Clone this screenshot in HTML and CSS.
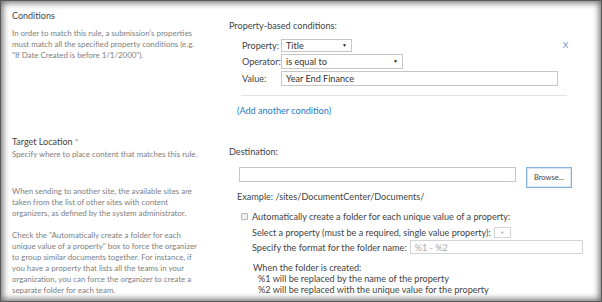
FILE: index.html
```html
<!DOCTYPE html>
<html lang="en">
<head>
    <meta charset="UTF-8">
    <title>Content Organizer Rule</title>
    <link rel="stylesheet" href="styles.css">
</head>
<body>
<div class="frame">
    <section class="row">
        <div class="info">
            <h2>Conditions</h2>
            <p class="first">In order to match this rule, a submission's properties<br>must match all the specified property conditions (e.g.<br>"If Date Created is before 1/1/2000").</p>
        </div>
        <div class="fields">
            <div class="label">Property-based conditions:</div>
            <div class="cond">
                <span class="cond-label">Property:</span>
                <div class="select w-prop"><span>Title</span><i class="arrow">&#9660;</i></div>
                <a class="remove">X</a>
                <span class="cond-label">Operator:</span>
                <div class="select w-op"><span>is equal to</span><i class="arrow">&#9660;</i></div>
                <span></span>
                <span class="cond-label">Value:</span>
                <div class="input w-val">Year End Finance</div>
                <span></span>
            </div>
            <div class="sep"></div>
            <a class="link">(Add another condition)</a>
        </div>
    </section>

    <section class="row target">
        <div class="info">
            <h2>Target Location <span class="req">*</span></h2>
            <p class="tight">Specify where to place content that matches this rule.</p>
            <p class="gap-lg">When sending to another site, the available sites are<br>taken from the list of other sites with content<br>organizers, as defined by the system administrator.</p>
            <p class="gap">Check the "Automatically create a folder for each<br>unique value of a property" box to force the organizer<br>to group similar documents together. For instance, if<br>you have a property that lists all the teams in your<br>organization, you can force the organizer to create a<br>separate folder for each team.</p>
        </div>
        <div class="fields">
            <div class="label">Destination:</div>
            <div class="dest">
                <div class="input w-dest"></div>
                <div class="browse">Browse...</div>
            </div>
            <div class="example">Example: /sites/DocumentCenter/Documents/</div>
            <div class="auto">
                <div class="check"><span class="box"></span>Automatically create a folder for each unique value of a property:</div>
                <div class="opt opt-prop">Select a property (must be a required, single value property): <div class="select w-small"><i class="arrow">&#9660;</i></div></div>
                <div class="opt opt-fmt">Specify the format for the folder name: <div class="input w-fmt placeholder">%1 - %2</div></div>
                <div class="note">
                    <div>When the folder is created:</div>
                    <div class="sub">%1 will be replaced by the name of the property</div>
                    <div class="sub">%2 will be replaced with the unique value for the property</div>
                </div>
            </div>
        </div>
    </section>
</div>
</body>
</html>
```

FILE: styles.css
```css
body {
    margin: 0;
    font-family: Lato, "Open Sans", sans-serif;
    color: #444;
}
.frame {
    width: 602px;
    height: 302px;
    box-sizing: border-box;
    padding: 10px 0 0 12px;
    background: #fff;
    overflow: hidden;
    box-shadow: inset 0 0 0 1px #5a5a5a, inset 0 0 6px 3px rgba(0, 0, 0, 0.55);
}
.row {
    display: grid;
    grid-template-columns: 217px 1fr;
}
.target {
    margin-top: 20px;
}
h2 {
    margin: 0;
    font-size: 9px;
    line-height: 12px;
    font-weight: normal;
    color: #444;
}
.req {
    color: #888;
    font-size: 8px;
}
.info p {
    margin: 0;
    font-size: 7.9px;
    line-height: 11px;
    color: #808080;
}
.info .first {
    margin-top: 5.5px;
}
.info .tight {
    margin-top: 0.5px;
}
.info .gap-lg {
    margin-top: 26px;
}
.info .gap {
    margin-top: 11px;
}
.fields {
    padding-top: 9.5px;
    font-size: 9.1px;
    line-height: 11px;
    color: #444;
}
.cond {
    display: grid;
    grid-template-columns: 39px 278px auto;
    grid-template-rows: 13px 15px 15px;
    row-gap: 2px;
    margin: 8px 0 0 13px;
    align-items: center;
}
.select, .input {
    box-sizing: border-box;
    height: 100%;
    border: 1px solid #c6c6c6;
    background: #fff;
    color: #333;
    display: flex;
    align-items: center;
    padding: 0 4px;
}
.select span {
    flex: 1;
}
.arrow {
    font-style: normal;
    font-size: 5px;
    color: #222;
}
.w-prop { width: 71px; }
.w-op { width: 122px; }
.w-val { width: 277px; }
.remove {
    margin-left: 4px;
    color: #5b8fd1;
    font-size: 8px;
}
.sep {
    margin: 9.5px 0 0 12px;
    width: 326px;
    border-top: 1px solid #e3e3e3;
}
.link {
    display: block;
    margin: 9px 0 0 8px;
    color: #2b78c5;
}
.dest {
    display: flex;
    align-items: flex-start;
    margin: 10.5px 0 0 10px;
}
.w-dest {
    width: 277px;
    height: 15px;
}
.browse {
    box-sizing: border-box;
    width: 46px;
    height: 21px;
    margin-left: 10px;
    border: 1px solid #86b1de;
    box-shadow: inset 0 0 0 1px #d7e6f5;
    background: #fdfdfd;
    font-size: 7.5px;
    color: #444;
    display: flex;
    align-items: center;
    justify-content: center;
}
.example {
    margin: 4px 0 0 8px;
    line-height: 10px;
}
.auto {
    margin-left: 12px;
}
.check {
    display: flex;
    align-items: center;
    margin-top: 8.5px;
}
.box {
    box-sizing: border-box;
    width: 7px;
    height: 7px;
    margin-right: 4px;
    border: 1px solid #b5b5b5;
    border-radius: 1px;
    background: #f2f2f2;
}
.opt {
    display: flex;
    align-items: center;
    height: 14px;
    margin-left: 11px;
}
.opt-prop {
    margin-top: 3.5px;
}
.opt-fmt {
    margin-top: 1px;
}
.w-small {
    width: 17px;
    height: 11px;
    margin-left: 3px;
    border-color: #d4d4d4;
    justify-content: center;
}
.w-small .arrow {
    font-size: 4px;
    color: #999;
}
.w-fmt {
    width: 173px;
    height: 14px;
    margin-left: 3px;
    border-color: #d4d4d4;
}
.placeholder {
    color: #aaa;
}
.note {
    margin: 7.5px 0 0 12px;
}
.note .sub {
    padding-left: 5px;
}
```
